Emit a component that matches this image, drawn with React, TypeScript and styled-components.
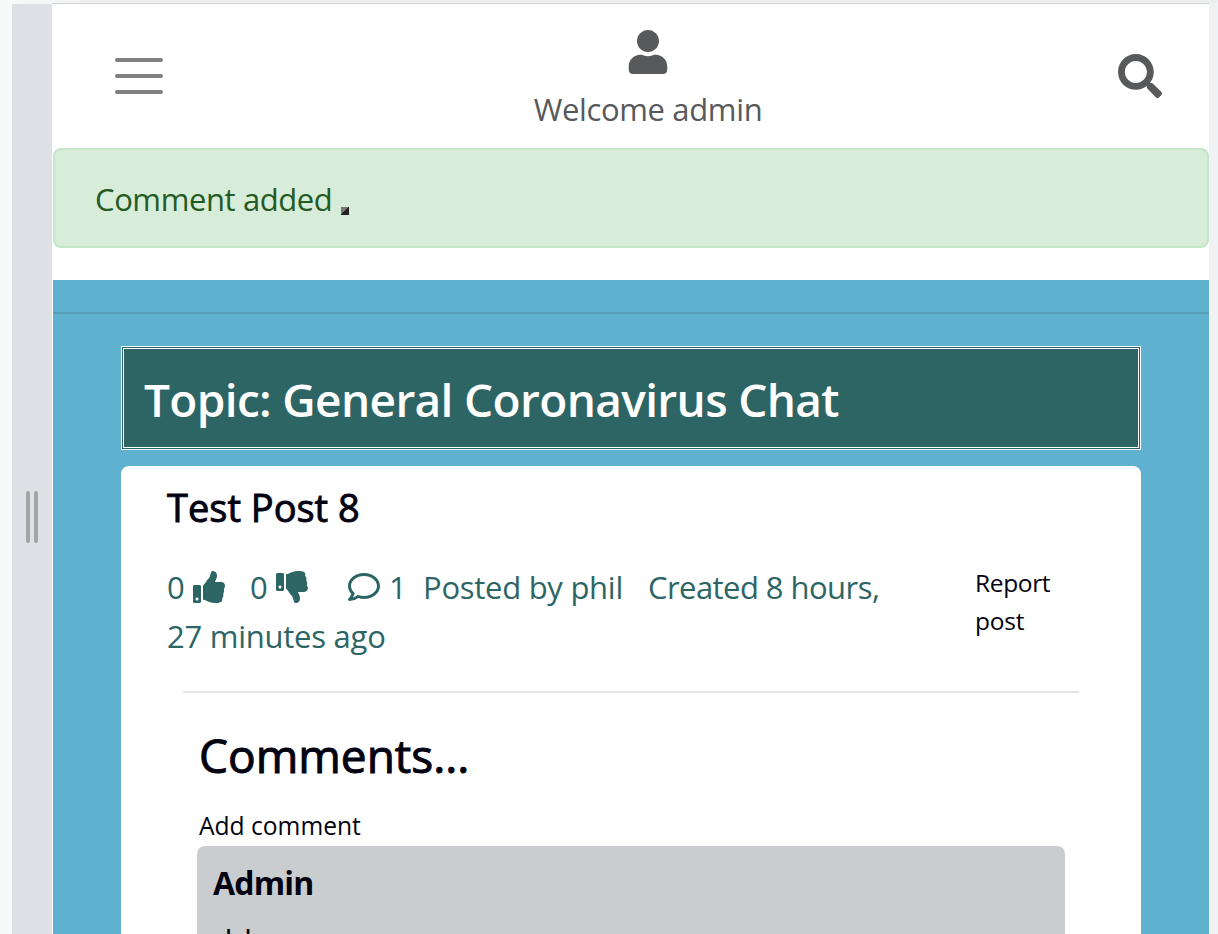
import React from "react";
import styled, { createGlobalStyle } from "styled-components";
import { FaUser, FaSearch, FaThumbsUp, FaThumbsDown, FaRegComment } from "react-icons/fa";

const Global = createGlobalStyle`
  * { box-sizing: border-box; }
  body { margin: 0; background: #f1f2f4; overflow: hidden; }
  body, h1, h2, h3, p { font-family: "Open Sans", "Noto Sans", sans-serif; }
  h1, h2, h3, p { margin: 0; }
`;
const Text = styled.span<{ $size?: number; $ls?: number; $weight?: number; $left?: number; $stroke?: number }>`
  font-size: ${p => p.$size ?? 31}px;
  letter-spacing: ${p => p.$ls ?? 0}px;
  font-weight: ${p => p.$weight ?? 400};
  margin-left: ${p => p.$left ?? 0}px;
  -webkit-text-stroke: ${p => p.$stroke ?? 0}px currentColor;
  white-space: nowrap;
`;
const Shell = styled.div`
  display: flex;
  width: 1218px;
  height: 934px;
  overflow: hidden;
  background: linear-gradient(#eeefef, #eeefef) 80px 0 / 100% 3px no-repeat, linear-gradient(90deg, #f8faf9 0 12px, #f1f2f4 80px);
`;
const Grip = styled.div`
  display: flex;
  justify-content: center;
  gap: 4px;
  width: 40px;
  height: 930px;
  margin: 4px 0 0 12px;
  padding-top: 487px;
  background: #dfe0e6;
`;
const GripBar = styled.i`
  width: 4px;
  height: 52px;
  border-radius: 2px;
  background: #a3a3a3;
`;
const Page = styled.main`
  width: 1157px;
  height: 931px;
  margin-top: 3px;
  padding-left: 1px;
  border-top: 1px solid #d0d2d5;
  background: #fff;
  overflow: hidden;
`;
const Header = styled.header`
  display: flex;
  height: 144px;
  padding: 0 47px 0 62px;
  color: #58595b;
`;
const Burger = styled.div`
  display: flex;
  flex-direction: column;
  gap: 12px;
  width: 48px;
  padding-top: 54px;
`;
const Line = styled.i`
  height: 4px;
  border-radius: 2px;
  background: #808080;
`;
const Welcome = styled.div`
  display: flex;
  flex-direction: column;
  align-items: center;
  width: 240px;
  padding-top: 26px;
  margin-left: 365px;
  line-height: 48px;
  svg { flex: none; margin-bottom: 11px; }
`;
const Search = styled.div`
  margin-left: auto;
  padding-top: 50px;
`;
const Alert = styled.div`
  display: flex;
  align-items: center;
  height: 100px;
  padding: 2px 40px 0;
  border: 2px solid #c3e6cb;
  border-radius: 8px;
  background: #d7ecd9;
  color: #245a24;
`;
const Handle = styled.i`
  width: 8px;
  height: 8px;
  margin: 23px 0 0 9px;
  background: linear-gradient(135deg, #777 50%, #222 50%);
`;
const Board = styled.section`
  height: 654px;
  margin-top: 32px;
  padding-top: 32px;
  background: #5fb1cf;
`;
const Rule = styled.div`
  height: 2px;
  background: #569fba;
`;
const Topic = styled.div`
  display: flex;
  align-items: center;
  height: 104px;
  margin: 32px 68px 0;
  padding: 1px 0 0 20px;
  border: 3px double #fff;
  background: #2d6565;
  color: #fff;
`;
const Card = styled.article`
  height: 480px;
  margin: 16px 68px 0;
  padding: 16px 46px 0;
  border-radius: 8px;
  background: #fff;
  color: #020210;
`;
const Title = styled.h2`
  height: 81px;
  line-height: 50px;
  font-size: 38px;
`;
const Meta = styled.div`
  display: grid;
  grid-template-columns: 808px 1fr;
  height: 128px;
`;
const Stats = styled.div`
  color: #2d6565;
  line-height: 49px;
`;
const StatRow = styled.div`
  display: flex;
  height: 49px;
  svg { flex: none; margin-top: 8px; }
`;
const Digit = styled(Text)`
  width: 18px;
`;
const Report = styled.a`
  display: flex;
  flex-direction: column;
  padding-top: 1px;
  line-height: 38px;
`;
const Comments = styled.section`
  margin: 0 16px;
  padding: 29px 0 0 16px;
  border-top: 2px solid #e5e5e5;
`;
const Heading = styled.h2`
  height: 84px;
  line-height: 66px;
  font-size: 46px;
`;
const Add = styled.p`
  height: 40px;
  line-height: 40px;
`;
const Comment = styled.div`
  display: flex;
  flex-direction: column;
  gap: 11px;
  height: 200px;
  margin: 0 14px 0 -2px;
  padding: 13px 16px;
  border-radius: 8px;
  background: #cacdd0;
  line-height: 48px;
`;

export default function App() {
  return (
    <>
      <Global />
      <Shell>
        <Grip><GripBar /><GripBar /></Grip>
        <Page>
          <Header>
            <Burger><Line /><Line /><Line /></Burger>
            <Welcome><FaUser size={44} /><Text $ls={-0.35}>Welcome admin</Text></Welcome>
            <Search><FaSearch size={44} /></Search>
          </Header>
          <Alert><Text $ls={-0.4}>Comment added</Text><Handle /></Alert>
          <Board>
            <Rule />
            <Topic><Text as="h1" $size={46} $weight={600} $ls={-0.65}>Topic: General Coronavirus Chat</Text></Topic>
            <Card>
              <Title><Text $size={38} $stroke={0.9}>Test Post 8</Text></Title>
              <Meta>
                <Stats>
                  <StatRow>
                    <Digit>0</Digit>
                    <FaThumbsUp size={32} style={{ marginLeft: 8 }} />
                    <Digit $left={25}>0</Digit>
                    <FaThumbsDown size={32} style={{ marginLeft: 8 }} />
                    <FaRegComment size={32} style={{ marginLeft: 40 }} />
                    <Digit $left={9}>1</Digit>
                    <Text $left={16} $ls={-0.27}>Posted by phil</Text>
                    <Text $left={25} $ls={-0.55}>Created 8 hours,</Text>
                  </StatRow>
                  <Text $ls={-0.25}>27 minutes ago</Text>
                </Stats>
                <Report><Text $size={24.5} $ls={-0.35}>Report</Text><Text $size={24.5} $ls={-0.25}>post</Text></Report>
              </Meta>
              <Comments>
                <Heading><Text $size={46} $stroke={1}>Comments...</Text></Heading>
                <Add><Text $size={24.6}>Add comment</Text></Add>
                <Comment>
                  <Text $size={32} $weight={700} $ls={-0.8}>Admin</Text>
                  <Text $size={32}>dd</Text>
                </Comment>
              </Comments>
            </Card>
          </Board>
        </Page>
      </Shell>
    </>
  );
}
